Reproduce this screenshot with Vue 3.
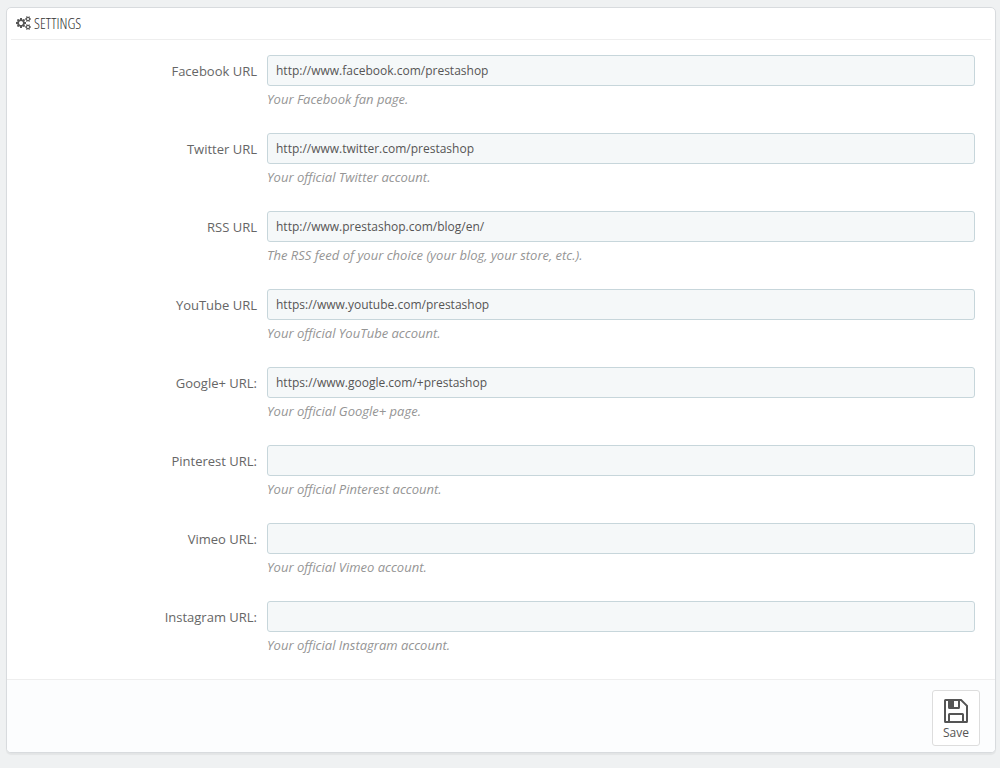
<script setup>
import { ref } from 'vue'

const fields = ref([
  { id: 'facebook', label: 'Facebook URL', value: 'http://www.facebook.com/prestashop', help: 'Your Facebook fan page.' },
  { id: 'twitter', label: 'Twitter URL', value: 'http://www.twitter.com/prestashop', help: 'Your official Twitter account.' },
  { id: 'rss', label: 'RSS URL', value: 'http://www.prestashop.com/blog/en/', help: 'The RSS feed of your choice (your blog, your store, etc.).' },
  { id: 'youtube', label: 'YouTube URL', value: 'https://www.youtube.com/prestashop', help: 'Your official YouTube account.' },
  { id: 'google', label: 'Google+ URL:', value: 'https://www.google.com/+prestashop', help: 'Your official Google+ page.' },
  { id: 'pinterest', label: 'Pinterest URL:', value: '', help: 'Your official Pinterest account.' },
  { id: 'vimeo', label: 'Vimeo URL:', value: '', help: 'Your official Vimeo account.' },
  { id: 'instagram', label: 'Instagram URL:', value: '', help: 'Your official Instagram account.' },
])
</script>

<template>
  <form class="panel" @submit.prevent>
    <h1 class="heading">
      <svg class="cogs" viewBox="0 0 1920 1792" aria-hidden="true">
        <path d="M896 896q0-106-75-181t-181-75-181 75-75 181 75 181 181 75 181-75 75-181zm768 512q0-52-38-90t-90-38-90 38-38 90q0 53 37.5 90.5t90.5 37.5 90.5-37.5 37.5-90.5zm0-1024q0-52-38-90t-90-38-90 38-38 90q0 53 37.5 90.5t90.5 37.5 90.5-37.5 37.5-90.5zm-384 421v185q0 10-7 19.5t-16 10.5l-155 24q-11 35-32 76 34 48 90 115 7 11 7 20 0 12-7 19-23 30-82.5 89.5t-78.5 59.5q-11 0-21-7l-115-90q-37 19-77 31-11 108-23 155-7 24-30 24h-186q-11 0-20-7.5t-10-17.5l-23-153q-34-10-75-31l-118 89q-7 7-20 7-11 0-21-8-144-133-144-160 0-9 7-19 10-14 41-53t47-61q-23-44-35-82l-152-24q-10-1-17-9.5t-7-19.5v-185q0-10 7-19.5t16-10.5l155-24q11-35 32-76-34-48-90-115-7-11-7-20 0-12 7-20 22-30 82-89t79-59q11 0 21 7l115 90q34-18 77-32 11-108 23-154 7-24 30-24h186q11 0 20 7.5t10 17.5l23 153q34 10 75 31l118-89q8-7 20-7 11 0 21 8 144 133 144 160 0 8-7 19-12 16-42 54t-45 60q23 48 34 82l152 23q10 2 17 10.5t7 19.5zm640 533v140q0 16-149 31-12 27-30 52 51 113 51 138 0 4-4 7-122 71-124 71-8 0-46-47t-52-68q-20 2-30 2t-30-2q-14 21-52 68t-46 47q-2 0-124-71-4-3-4-7 0-25 51-138-18-25-30-52-149-15-149-31v-140q0-16 149-31 13-29 30-52-51-113-51-138 0-4 4-7 4-2 35-20t59-34 30-16q8 0 46 46.5t52 67.5q20-2 30-2t30 2q51-71 92-112l6-2q4 0 124 70 4 3 4 7 0 25-51 138 17 23 30 52 149 15 149 31zm0-1024v140q0 16-149 31-12 27-30 52 51 113 51 138 0 4-4 7-122 71-124 71-8 0-46-47t-52-68q-20 2-30 2t-30-2q-14 21-52 68t-46 47q-2 0-124-71-4-3-4-7 0-25 51-138-18-25-30-52-149-15-149-31v-140q0-16 149-31 13-29 30-52-51-113-51-138 0-4 4-7 4-2 35-20t59-34 30-16q8 0 46 46.5t52 67.5q20-2 30-2t30 2q51-71 92-112l6-2q4 0 124 70 4 3 4 7 0 25-51 138 17 23 30 52 149 15 149 31z" />
      </svg>
      <span>SETTINGS</span>
    </h1>

    <div class="fields">
      <div v-for="field in fields" :key="field.id" class="row">
        <label class="label" :for="field.id">{{ field.label }}</label>
        <div class="control">
          <input :id="field.id" v-model="field.value" class="input" type="text" :aria-describedby="field.id + '-help'" />
          <p :id="field.id + '-help'" class="help">{{ field.help }}</p>
        </div>
      </div>
    </div>

    <div class="footer">
      <button class="save" type="submit">
        <svg class="floppy" viewBox="0 0 24 24" aria-hidden="true">
          <path fill-rule="evenodd" d="M1.5 0H17.5L24 6.5V22.5Q24 24 22.5 24H1.5Q0 24 0 22.5V1.5Q0 0 1.5 0ZM2 2V22H4V15.5Q4 14 5.500 14H18.500Q20 14 20 15.500V22H22V7.300L16.700 2H16V8.500Q16 10 14.500 10H5.500Q4 10 4 8.500V2ZM10 2V8H14V2ZM6 16V22H18V16Z" />
        </svg>
        <span>Save</span>
      </button>
    </div>
  </form>
</template>

<style>
body {
  background: #eff1f2;
}
</style>

<style scoped>
.panel {
  margin: 7px 4px 15px 6px;
  border: 1px solid #d8dbde;
  border-radius: 5px;
  background: #fff;
  box-shadow: 0 2px 1px rgba(0, 0, 0, 0.05);
  overflow: hidden;
  color: #666;
  font-family: "Open Sans", "Noto Sans", sans-serif;
  font-size: 13px;
}

.heading {
  display: flex;
  align-items: center;
  gap: 3px;
  height: 30px;
  margin: 0 4px;
  padding: 0 5px 1px;
  border-bottom: 1px solid #eee;
  color: #333;
  font-family: "Ubuntu Condensed", "Open Sans Condensed Light", "Open Sans Condensed", "Open Sans", sans-serif;
  font-size: 15px;
  font-weight: 300;
}

.cogs {
  width: 15px;
  height: 14px;
  fill: #555;
}

.fields {
  display: grid;
  gap: 25px;
  padding: 15px 20px 25px 14px;
}

.row {
  display: grid;
  grid-template-columns: 1fr 3fr;
  gap: 10px;
}

.label {
  padding-top: 7px;
  line-height: 18px;
  text-align: right;
}

.input {
  display: block;
  box-sizing: border-box;
  width: 100%;
  height: 31px;
  padding: 6px 8px;
  border: 1px solid #c7d6db;
  border-radius: 3px;
  background: #f5f8f9;
  color: #555;
  font-family: inherit;
  font-size: 12px;
}

.help {
  margin: 4px 0 0;
  color: #959595;
  font-size: 13px;
  font-style: italic;
  line-height: 18px;
}

.footer {
  display: flex;
  justify-content: flex-end;
  padding: 10px 15px 6px;
  border-top: 1px solid #eee;
  background: #fcfdfe;
}

.save {
  display: flex;
  flex-direction: column;
  align-items: center;
  gap: 1px;
  box-sizing: border-box;
  min-width: 48px;
  padding: 8px 9px 3px;
  border: 1px solid #ddd;
  border-radius: 3px;
  background: #fff;
  color: #555;
  font-family: inherit;
  font-size: 12px;
  line-height: 18px;
}

.floppy {
  width: 24px;
  height: 24px;
  fill: #555;
}
</style>
